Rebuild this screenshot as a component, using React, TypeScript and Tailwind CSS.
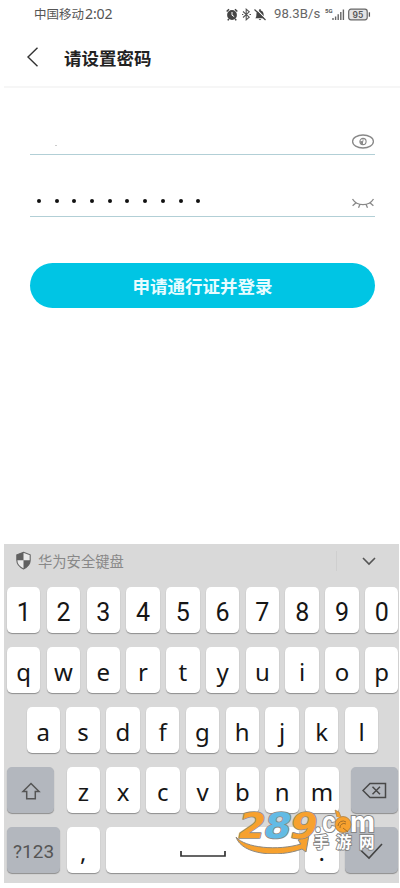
import type { ReactNode } from "react";

function Key({ children, className = "w-[33.4px]" }: { children: ReactNode; className?: string }) {
  return (
    <div
      className={`flex h-[46px] shrink-0 items-center justify-center rounded-[5px] bg-white text-[24px] text-[#161616] shadow-[0_1px_1px_#8d8d8d] ${className}`}
    >
      {children}
    </div>
  );
}

function Letters({ keys }: { keys: string }) {
  return (
    <>
      {keys.split("").map((k) => (
        <Key key={k}>
          <span className="mt-[4px] leading-none font-['Noto_Sans',sans-serif]">{k}</span>
        </Key>
      ))}
    </>
  );
}

function StatusBar() {
  return (
    <div className="flex h-[28px] items-center pl-[34px] text-[#555]">
      <span className="text-[12.5px] leading-none">中国移动</span>
      <span className="ml-[1px] w-[30px] font-['Noto_Sans',sans-serif] text-[14.2px] leading-none tracking-[-0.2px]">2:02</span>
      <svg className="ml-[111px]" width="12" height="13" viewBox="0 0 12 13">
        <circle cx="6" cy="7" r="4.9" fill="#444" />
        <path d="M.7 3.5 3 1.2M9 1.2l2.3 2.3M2.8 11l-1 1.4M9.2 11l1 1.4" stroke="#444" strokeWidth="1.5" />
        <path d="M6 4v3.2l2.2 1.4" fill="none" stroke="#fff" />
      </svg>
      <svg className="ml-[4px]" width="9" height="13" viewBox="0 0 9 13" fill="none" stroke="#555" strokeWidth="1.1">
        <path d="m1 3.5 6.2 5.7-3 2.6V1.2l3 2.6L1 9.5" />
        <path d="M0 6.5h1.3M7.5 6.5H9" />
      </svg>
      <svg className="ml-[3px]" width="12" height="13" viewBox="0 0 12 13">
        <path d="M1.2 10.2c1.2-1 1.2-2.3 1.2-4 0-2.2 1.3-3.5 2.8-3.8V1.2h1.6v1.2c1.7.4 2.8 1.8 2.8 3.8 0 1.7.1 3 1.3 4zM4.7 11h2.6L6 12.2z" fill="#444" />
        <path d="m1.6 .4 10.5 11" stroke="#fff" strokeWidth="1.2" />
        <path d="m.5 1.5 11 10.5" stroke="#444" strokeWidth="1.2" />
      </svg>
      <span className="ml-[8px] w-[45px] whitespace-nowrap font-[Roboto,sans-serif] text-[13.2px] leading-none text-[#666]">98.3B/s</span>
      <svg className="ml-[6px]" width="20" height="13" viewBox="0 0 20 13">
        <text x="0" y="5.2" fontSize="6" fontWeight="700" fontFamily="Roboto, sans-serif" fill="#555">5G</text>
        <path d="M8 12v-2M10.6 12V8.5M13.2 12V6.3M15.8 12V4M18.4 12V1.5" stroke="#666" strokeWidth="1.4" />
      </svg>
      <svg className="ml-[3px]" width="23" height="13" viewBox="0 0 23 13">
        <rect x=".7" y="1.2" width="18.5" height="10.6" rx="2.2" fill="#e4e4e4" stroke="#666" strokeWidth="1.2" />
        <path d="M21.4 4.3v4.4" stroke="#555" strokeWidth="1.3" />
        <text x="10" y="9.6" textAnchor="middle" fontSize="8.5" fontWeight="600" fontFamily="Inter, sans-serif" fill="#555">95</text>
      </svg>
    </div>
  );
}

function Watermark() {
  return (
    <svg className="absolute left-[233px] top-[806px]" width="148" height="48" viewBox="0 0 148 48">
      <path d="M3 31c9 11 42 14 65 7l-3-4 11-5-3 17-4-3C45 52 9 49 3 31Z" fill="#f7a12e" stroke="#8d8981" />
      <g
        fontFamily="'DejaVu Sans', sans-serif"
        fontWeight="700"
        fontSize="35"
        stroke="#8d8981"
        strokeWidth="1.6"
        paintOrder="stroke"
        strokeLinejoin="round"
      >
        <text transform="translate(3 31.5) skewX(-12)" textLength="27" lengthAdjust="spacingAndGlyphs" fill="#f7a12e">2</text>
        <text transform="translate(29 31.5) skewX(-12)" textLength="27" lengthAdjust="spacingAndGlyphs" fill="#62bbe5">8</text>
        <text transform="translate(55 31.5) skewX(-12)" textLength="27" lengthAdjust="spacingAndGlyphs" fill="#f7a12e">9</text>
      </g>
      <g fontFamily="Inter, sans-serif" fontWeight="700" fontSize="28" fill="#fff" stroke="#858585" strokeWidth="2" paintOrder="stroke">
        <text x="81" y="26" textLength="22" lengthAdjust="spacingAndGlyphs">.c</text>
        <text x="117" y="26" textLength="25" lengthAdjust="spacingAndGlyphs">m</text>
      </g>
      <circle cx="110" cy="18.5" r="8" fill="#f7a12e" stroke="#a98047" strokeWidth=".8" />
      <path d="m104 11-2-7 4 2 2 5" fill="#f7a12e" stroke="#a98047" strokeWidth=".7" />
      <path d="M105 20a5 5 0 0 1 8-4M107 22a4 4 0 0 1 6-4M110 22l5 4" fill="none" stroke="#a66e25" />
      <g fontFamily="'Noto Sans CJK SC', sans-serif" fontSize="15.5" fontWeight="700" fill="#fff" stroke="#858585" strokeWidth="1.8" paintOrder="stroke">
        <text x="80.5" y="42">手</text>
        <text x="103" y="42">游</text>
        <text x="126" y="42">网</text>
      </g>
    </svg>
  );
}

export default function App() {
  return (
    <main className="relative flex h-[888px] w-[400px] flex-col overflow-hidden bg-white font-['Noto_Sans_CJK_SC',sans-serif]">
      <StatusBar />
      <header className="ml-[4px] flex h-[60px] items-center border-b-2 border-[#f6f6f6] pl-[22px]">
        <svg width="14" height="20" viewBox="0 0 14 20" fill="none" stroke="#333" strokeWidth="1.4">
          <path d="M11.5.8 2 10l9.5 9.2" />
        </svg>
        <h1 className="ml-[24px] mt-[1px] text-[17.5px] font-bold leading-none text-[#222]">请设置密码</h1>
      </header>

      <section className="ml-[30px] w-[345px]">
        <div className="flex h-[67px] items-end justify-between border-b border-[#b2cfd6] pb-[4px]">
          <span className="mb-[4px] ml-[25px] h-px w-[2px] bg-[#ccc]" />
          <svg width="24" height="17" viewBox="0 0 24 17" fill="none" stroke="#888" strokeWidth="1.3">
            <ellipse cx="12" cy="8.5" rx="10.4" ry="6.5" />
            <circle cx="12" cy="8.5" r="3.1" strokeWidth="1.1" />
            <path d="M12 6v2.5H9.5A2.5 2.5 0 0 0 12 11" fill="#888" strokeWidth=".8" />
          </svg>
        </div>
        <div className="flex h-[62px] items-center justify-between border-b border-[#b2cfd6]">
          <div className="ml-[7px] mt-[31px] flex gap-[13.7px]">
            {Array.from({ length: 10 }, (_, i) => (
              <span key={i} className="size-[4px] rounded-full bg-[#111]" />
            ))}
          </div>
          <svg className="mt-[36px]" width="24" height="12" viewBox="0 0 24 12" fill="none" stroke="#888" strokeWidth="1.3">
            <path d="M1.5 1C6 8.5 18 8.5 22.5 1M4.8 4.9 1.6 7.7M8.8 6.7 7.5 9.8M15.2 6.7l1.3 3.1M19.2 4.9l3.2 2.8" />
          </svg>
        </div>
        <button className="mt-[46px] flex h-[45px] w-full items-center justify-center rounded-full bg-[#00c5e4] text-[17.5px] font-bold leading-none text-[#e8fcff]">
          申请通行证并登录
        </button>
      </section>

      <section className="ml-[4px] mt-[236px] h-[339px] w-[395px] bg-[#d9d9d9]">
        <div className="flex h-[43px] items-start pt-[7px]">
          <svg className="ml-[11px]" width="17" height="19" viewBox="0 0 17 19">
            <path d="M8.5 1.3 15.2 3.8v5.3c0 4.2-2.6 7-6.7 8.8-4.1-1.8-6.7-4.6-6.7-8.8V3.8z" fill="#e9e9e9" stroke="#666" strokeWidth="1.1" />
            <path d="M8.5 1.3v8H1.8V3.8zM8.5 9.3h6.7c0 4-2.6 6.8-6.7 8.6z" fill="#606060" />
          </svg>
          <span className="ml-[6px] mt-[3px] text-[14.3px] leading-none text-[#888]">华为安全键盘</span>
          <span className="ml-auto mr-[25px] h-[20px] w-px bg-[#cfcfcf]" />
          <svg className="mr-[23px] mt-[6px]" width="14" height="9" viewBox="0 0 14 9" fill="none" stroke="#555" strokeWidth="1.6">
            <path d="m1 1 6 6 6-6" />
          </svg>
        </div>
        <div className="flex flex-col gap-[14px]">
          <div className="flex gap-[6.4px] pl-[3px]">
            {"1234567890".split("").map((n) => (
              <Key key={n}>
                <span className="mt-[4px] font-[Roboto,sans-serif] text-[25px] leading-none">{n}</span>
              </Key>
            ))}
          </div>
          <div className="flex gap-[6.4px] pl-[3px]"><Letters keys="qwertyuiop" /></div>
          <div className="flex gap-[6.4px] pl-[22.6px]"><Letters keys="asdfghjkl" /></div>
          <div className="flex gap-[6.4px] pl-[3px]">
            <Key className="mr-[6px] w-[47.2px] bg-[#b3b7be]!">
              <svg className="mt-[2px]" width="20" height="19" viewBox="0 0 20 19" fill="none" stroke="#555" strokeWidth="1.5">
                <path d="m10 1.5 8 8h-3.7v7.2H5.7V9.5H2z" />
              </svg>
            </Key>
            <Letters keys="zxcvbnm" />
            <Key className="ml-[6px] w-[47.2px] bg-[#b3b7be]!">
              <svg className="mt-[2px]" width="25" height="18" viewBox="0 0 25 18" fill="none" stroke="#484848" strokeWidth="1.5">
                <path d="M8 1.5h15.5v14H8l-7-7zM10.5 4.8l7.5 7.5M18 4.8l-7.5 7.5" />
              </svg>
            </Key>
          </div>
          <div className="flex gap-[6.4px] pl-[3px]">
            <Key className="w-[53.2px] bg-[#b3b7be]!">
              <span className="mt-[2px] font-[Roboto,sans-serif] text-[19px] leading-none text-[#555]">?123</span>
            </Key>
            <Letters keys="," />
            <Key className="w-[192.4px]">
              <svg className="mt-[7px]" width="46" height="8" viewBox="0 0 46 8" fill="none" stroke="#333" strokeWidth="1.7">
                <path d="M1 1v5h44V1" />
              </svg>
            </Key>
            <Letters keys="." />
            <Key className="w-[53.2px] bg-[#b3b7be]!">
              <svg className="mt-[2px]" width="23" height="17" viewBox="0 0 23 17" fill="none" stroke="#444" strokeWidth="1.6">
                <path d="m1 7.5 8 7.5L22 1" />
              </svg>
            </Key>
          </div>
        </div>
      </section>
      <Watermark />
    </main>
  );
}
